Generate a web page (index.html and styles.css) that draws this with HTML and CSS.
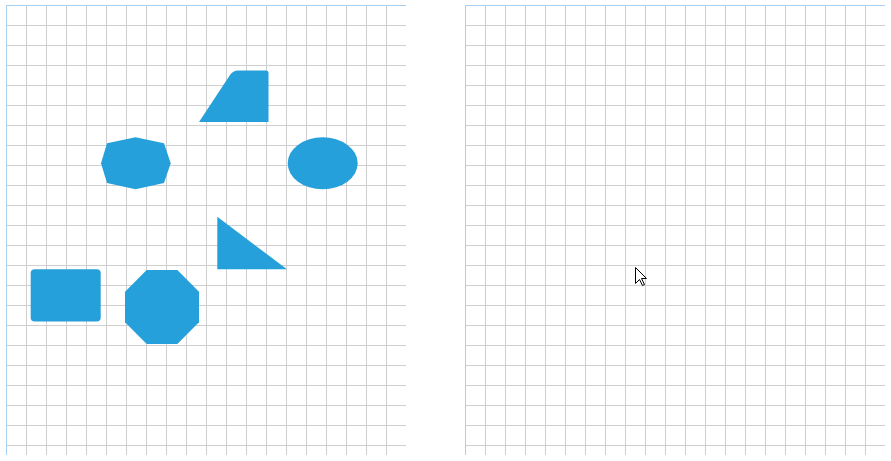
FILE: index.html
```html
<!DOCTYPE html>
<html>
<head>
<meta charset="utf-8">
<link rel="stylesheet" href="styles.css">
</head>
<body>
<div class="stage">
  <div class="canvas canvas-left">
    <svg class="shapes" width="400" height="450" viewBox="6 5 400 450">
      <path class="shape" d="M199,122 L230,75 Q233,70.5 238,70.5 L266,70.5 Q268.5,70.5 268.5,73 L268.5,122 Z"/>
      <polygon class="shape" points="135.5,137.3 164,143.3 170.7,163.3 164,183 135.5,189.3 107,183 101,163.3 107,143.3"/>
      <ellipse class="shape" cx="322.7" cy="163.3" rx="35" ry="26"/>
      <polygon class="shape" points="217.3,216.7 217.3,269.3 287,269.3"/>
      <rect class="shape" x="30.7" y="269.3" width="70" height="52.3" rx="4"/>
      <polygon class="shape" points="146.7,270 177.3,270 199,291.7 199,322.3 177.3,344 146.7,344 125,322.3 125,291.7"/>
    </svg>
  </div>
  <div class="canvas canvas-right">
    <svg class="cursor" width="13" height="20" viewBox="0 0 13 20">
      <path d="M0.5,0.5 L0.5,16.5 L4.5,12.5 L7.5,18.5 L9.5,17.5 L6.5,11.5 L11.5,11.5 Z" fill="#fff" stroke="#000" stroke-width="1" stroke-linejoin="miter"/>
    </svg>
  </div>
</div>
</body>
</html>
```
FILE: styles.css
```css
html, body {
  margin: 0;
  padding: 0;
  background: #ffffff;
  font-family: "Liberation Sans", Arial, sans-serif;
}

.stage {
  display: flex;
  gap: 59px;
  padding: 5px 0 0 6px;
}

.canvas {
  position: relative;
  box-sizing: border-box;
  height: 450px;
  border-left: 1px solid #a8d0f3;
  border-top: 1px solid #a8d0f3;
  background-color: #ffffff;
  background-origin: border-box;
  background-image:
    linear-gradient(to right, #cfcfcf 1px, transparent 1px),
    linear-gradient(to bottom, #cfcfcf 1px, transparent 1px);
  background-size: 20px 20px;
  background-position: 0 0;
}

.canvas-left {
  width: 400px;
}

.canvas-right {
  width: 420px;
}

.shapes {
  position: absolute;
  left: -1px;
  top: -1px;
  display: block;
}

.shape {
  fill: #26a0da;
}

.cursor {
  position: absolute;
  left: 169px;
  top: 261px;
  display: block;
}
```
